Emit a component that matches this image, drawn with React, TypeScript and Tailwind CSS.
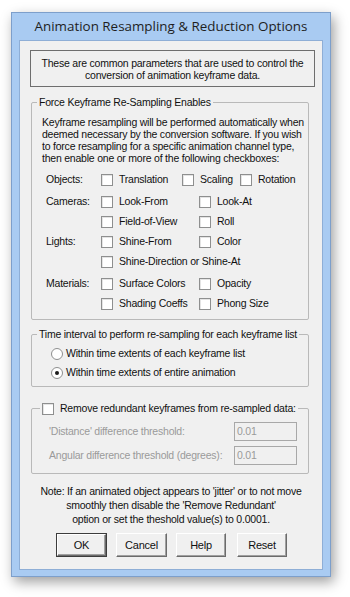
import React from "react";

const ui = "font-['Liberation_Sans',Arial,sans-serif] text-[10.5px] tracking-[-0.22px] text-[#111]";

const Check = () => (
  <span className="block w-[12px] h-[12px] shrink-0 border border-[#8e8f8f] bg-white shadow-[inset_1px_1px_0_#e4e4e4]" />
);

const Radio = ({ on }: { on?: boolean }) => (
  <span className="flex items-center justify-center w-[12px] h-[12px] shrink-0 rounded-full border border-[#8e8f8f] bg-white">
    {on && <span className="block w-[4px] h-[4px] rounded-full bg-[#1c1c1c]" />}
  </span>
);

const Item = ({ label, w }: { label: string; w?: string }) => (
  <div className={`flex items-center gap-[6px] ${w ?? ""}`}>
    <Check />
    <span className="whitespace-nowrap">{label}</span>
  </div>
);

const Legend = ({ children, ml = "ml-[5px]" }: { children: React.ReactNode; ml?: string }) => (
  <div className={`-mt-[7px] ${ml} w-fit px-[2px] h-[13px] leading-[13px] bg-[#f0f0f0] flex items-center gap-[6px] whitespace-nowrap`}>
    {children}
  </div>
);

const Btn = ({ label, def, cls }: { label: string; def?: boolean; cls: string }) => (
  <div className={`${cls} h-[24px] ${def ? "border border-[#3c3c3c]" : ""}`}>
    <div className="h-full flex items-center justify-center bg-[#f0f0f0] border-t border-l border-t-white border-l-white border-r border-b border-r-[#6b6b6b] border-b-[#6b6b6b] shadow-[inset_-1px_-1px_0_#a0a0a0] text-[11px]">
      {label}
    </div>
  </div>
);

const intro = [
  "Keyframe resampling will be performed automatically when",
  "deemed necessary by the conversion software. If you wish",
  "to force resampling for a specific animation channel type,",
  "then enable one or more of the following checkboxes:",
];

export default function App() {
  return (
    <div className="w-[350px] h-[597px] bg-white pt-[12px] pl-[11px]">
      <div className="w-[320px] h-[565px] bg-[#a9cbf2] border border-[#7d9fcb] shadow-[3px_5px_12px_rgba(0,0,0,0.38)] flex flex-col px-[7px] pb-[6px]">
        <div className="h-[27px] flex items-center justify-center font-['Open_Sans',sans-serif] text-[13.4px] text-[#1e1e1e]">
          Animation Resampling &amp; Reduction Options
        </div>
        <div className={`${ui} w-[304px] h-[530px] bg-[#f0f0f0] border border-[#8eaed6] flex flex-col`}>
          {/* intro */}
          <div className="mt-[9px] ml-[10px] w-[285px] h-[37px] border border-[#6e6e6e] flex flex-col items-center justify-center leading-[12px] text-center whitespace-nowrap">
            <span>These are common parameters that are used to control the</span>
            <span>conversion of animation keyframe data.</span>
          </div>

          {/* force resampling */}
          <div className="mt-[15px] ml-[11px] w-[278px] border border-[#b9b9b9] rounded-[2px] flex flex-col pb-[5px]">
            <Legend>Force Keyframe Re-Sampling Enables</Legend>
            <div className="mt-[7px] pl-[10px] leading-[12px] flex flex-col whitespace-nowrap">
              {intro.map((l) => (
                <span key={l}>{l}</span>
              ))}
            </div>
            <div className="mt-[6px] pl-[14px] flex flex-col">
              <div className="flex items-center h-[20px]">
                <span className="w-[55px]">Objects:</span>
                <Item label="Translation" w="w-[81px]" />
                <Item label="Scaling" w="w-[58px]" />
                <Item label="Rotation" />
              </div>
              <div className="flex items-center h-[20px] mt-[2px]">
                <span className="w-[55px]">Cameras:</span>
                <Item label="Look-From" w="w-[98px]" />
                <Item label="Look-At" />
              </div>
              <div className="flex items-center h-[20px]">
                <span className="w-[55px]" />
                <Item label="Field-of-View" w="w-[98px]" />
                <Item label="Roll" />
              </div>
              <div className="flex items-center h-[20px]">
                <span className="w-[55px]">Lights:</span>
                <Item label="Shine-From" w="w-[98px]" />
                <Item label="Color" />
              </div>
              <div className="flex items-center h-[20px]">
                <span className="w-[55px]" />
                <Item label="Shine-Direction or Shine-At" />
              </div>
              <div className="flex items-center h-[20px] mt-[2px]">
                <span className="w-[55px]">Materials:</span>
                <Item label="Surface Colors" w="w-[98px]" />
                <Item label="Opacity" />
              </div>
              <div className="flex items-center h-[20px]">
                <span className="w-[55px]" />
                <Item label="Shading Coeffs" w="w-[98px]" />
                <Item label="Phong Size" />
              </div>
            </div>
          </div>

          {/* time interval */}
          <div className="mt-[14px] ml-[11px] w-[278px] border border-[#b9b9b9] rounded-[2px] flex flex-col pb-[4px]">
            <Legend>Time interval to perform re-sampling for each keyframe list</Legend>
            <div className="mt-[3px] pl-[19px] flex flex-col">
              <div className="flex items-center gap-[3px] h-[19px]">
                <Radio />
                <span>Within time extents of each keyframe list</span>
              </div>
              <div className="flex items-center gap-[3px] h-[19px]">
                <Radio on />
                <span>Within time extents of entire animation</span>
              </div>
            </div>
          </div>

          {/* redundant keyframes */}
          <div className="mt-[21px] ml-[11px] w-[278px] border border-[#b9b9b9] rounded-[2px] flex flex-col pb-[8px]">
            <Legend ml="ml-[8px]">
              <Check />
              <span>Remove redundant keyframes from re-sampled data:</span>
            </Legend>
            <div className="mt-[7px] pl-[17px] flex flex-col text-[#9a9a9a]">
              <div className="flex items-center h-[19px]">
                <span className="w-[185px] whitespace-nowrap">'Distance' difference threshold:</span>
                <span className="w-[63px] h-[19px] border border-[#a8a8a8] bg-[#f0f0f0] pl-[2px] flex items-center">0.01</span>
              </div>
              <div className="flex items-center h-[19px] mt-[5px]">
                <span className="w-[185px] whitespace-nowrap">Angular difference threshold (degrees):</span>
                <span className="w-[63px] h-[19px] border border-[#a8a8a8] bg-[#f0f0f0] pl-[2px] flex items-center">0.01</span>
              </div>
            </div>
          </div>

          {/* note */}
          <div className="mt-[10px] flex flex-col items-center leading-[14px] text-center whitespace-nowrap">
            <span>Note: If an animated object appears to 'jitter' or to not move</span>
            <span>smoothly then disable the 'Remove Redundant'</span>
            <span>option or set the theshold value(s) to 0.0001.</span>
          </div>

          {/* buttons */}
          <div className="mt-[7px] flex">
            <Btn label="OK" def cls="ml-[36px] w-[51px]" />
            <Btn label="Cancel" cls="ml-[9px] w-[51px]" />
            <Btn label="Help" cls="ml-[9px] w-[50px]" />
            <Btn label="Reset" cls="ml-[11px] w-[50px]" />
          </div>
        </div>
      </div>
    </div>
  );
}
